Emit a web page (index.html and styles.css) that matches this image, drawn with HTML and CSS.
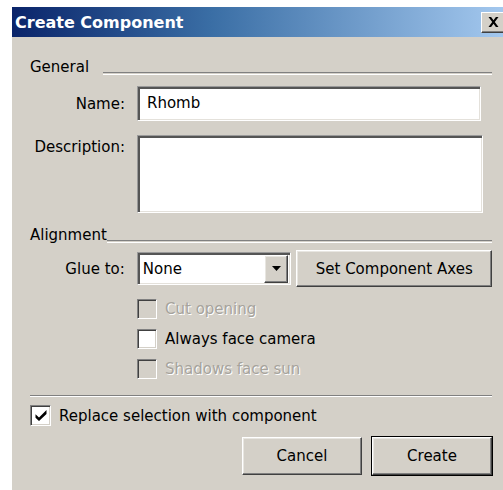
FILE: index.html
```html
<!DOCTYPE html>
<html>
<head>
<meta charset="utf-8">
<title>Create Component</title>
<link rel="stylesheet" href="styles.css">
</head>
<body>
<div class="dialog">
  <div class="titlebar">
    <span class="title">Create Component</span>
    <span class="close">
      <svg width="11" height="10" viewBox="0 0 11 10"><path d="M0.5 0h2.6l2.4 3.3L7.9 0h2.6L6.8 5l3.7 5H7.9L5.5 6.7 3.1 10H0.5l3.7-5z" fill="#000"/></svg>
    </span>
  </div>
  <div class="content">
    <div class="group-title"><span>General</span><span class="rule rule-gap"></span></div>

    <div class="field-row name-row">
      <label class="label">Name:</label>
      <div class="sunken input">Rhomb</div>
    </div>

    <div class="field-row desc-row">
      <label class="label label-top">Description:</label>
      <div class="sunken textarea"></div>
    </div>

    <div class="group-title align-title"><span>Alignment</span><span class="rule"></span></div>

    <div class="field-row glue-row">
      <label class="label">Glue to:</label>
      <div class="sunken select">
        <span class="select-value">None</span>
        <span class="raised drop">
          <svg width="9" height="5" viewBox="0 0 9 5"><path d="M0 0h9L4.5 5z" fill="#000"/></svg>
        </span>
      </div>
      <button class="raised btn axes">Set Component Axes</button>
    </div>

    <div class="checks">
      <div class="check disabled"><span class="box"></span><span>Cut opening</span></div>
      <div class="check"><span class="box white"></span><span>Always face camera</span></div>
      <div class="check disabled"><span class="box"></span><span>Shadows face sun</span></div>
    </div>

    <div class="separator"></div>

    <div class="check replace">
      <span class="box white">
        <svg width="12" height="11" viewBox="0 0 12 11"><path d="M0.5 4.2l3.5 3.3L11.5 0v4L4 11 0.5 7.8z" fill="#000"/></svg>
      </span>
      <span>Replace selection with component</span>
    </div>

    <div class="actions">
      <button class="raised btn">Cancel</button>
      <button class="raised btn default">Create</button>
    </div>
  </div>
</div>
</body>
</html>
```
FILE: styles.css
```css
html, body {
  margin: 0;
  background: #fff;
  overflow: hidden;
}

body {
  padding: 7px 0 0 12px;
  font-family: "DejaVu Sans", Verdana, sans-serif;
  font-size: 15px;
  color: #000;
}

.dialog {
  width: 498px;
  height: 500px;
  background: #d4d0c8;
}

/* caption bar */
.titlebar {
  height: 30px;
  display: flex;
  align-items: center;
  justify-content: space-between;
  padding: 0 0 0 3px;
  background: linear-gradient(to right, #0a246a 0%, #3a6ea5 40%, #a6caf0 100%);
}

.title {
  color: #fff;
  font-weight: bold;
  font-size: 16px;
}

.close {
  width: 24px;
  height: 21px;
  margin-right: 5px;
  box-sizing: border-box;
  display: flex;
  align-items: center;
  justify-content: center;
  background: #d4d0c8;
  border: 1px solid;
  border-color: #fff #404040 #404040 #fff;
  box-shadow: inset -1px -1px 0 #808080;
}

.content {
  padding: 20px 0 0 18px;
  width: 462px;
}

/* group captions with an etched rule */
.group-title {
  display: flex;
  align-items: flex-start;
  height: 20px;
  line-height: 20px;
}

.rule {
  flex: 1;
  height: 1px;
  margin-top: 15px;
  border-top: 1px solid #808080;
  border-bottom: 1px solid #fff;
}

.rule-gap {
  margin-left: 14px;
}

.align-title {
  margin-top: 12px;
}

.field-row {
  display: flex;
  align-items: center;
}

.label {
  width: 95px;
  margin-right: 12px;
  text-align: right;
  line-height: 20px;
}

.label-top {
  align-self: flex-start;
  padding-top: 2px;
}

/* sunken 3D edit boxes */
.sunken {
  box-sizing: border-box;
  background: #fff;
  border: 1px solid;
  border-color: #9a9a9a #fff #fff #9a9a9a;
  box-shadow: inset 2px 2px 0 #555, inset -1px -1px 0 #e4e1db;
}

.name-row {
  margin-top: 9px;
}

.input {
  width: 344px;
  height: 35px;
  padding: 6px 0 0 9px;
  line-height: 20px;
}

.desc-row {
  margin-top: 14px;
}

.textarea {
  width: 346px;
  height: 78px;
}

.glue-row {
  margin-top: 5px;
  height: 37px;
}

.select {
  width: 155px;
  height: 33px;
  display: flex;
  align-items: center;
  justify-content: space-between;
  padding: 2px 2px 2px 5px;
}

.select-value {
  line-height: 20px;
}

/* raised 3D buttons */
.raised {
  box-sizing: border-box;
  background: #d4d0c8;
  border: 1px solid;
  border-color: #fff #404040 #404040 #fff;
  box-shadow: inset -1px -1px 0 #808080, inset 1px 1px 0 #e8e6e1;
}

.drop {
  width: 24px;
  height: 28px;
  display: flex;
  align-items: center;
  justify-content: center;
}

.btn {
  font-family: inherit;
  font-size: 15px;
  color: #000;
  padding: 0;
  height: 38px;
}

.axes {
  margin-left: 5px;
  width: 196px;
  height: 37px;
}

.checks {
  margin: 12px 0 0 107px;
  display: flex;
  flex-direction: column;
  gap: 10px;
}

.check {
  display: flex;
  align-items: center;
  gap: 8px;
  height: 20px;
  line-height: 20px;
}

.box {
  box-sizing: border-box;
  width: 20px;
  height: 20px;
  display: flex;
  align-items: center;
  justify-content: center;
  border: 1px solid;
  border-color: #808080 #fff #fff #808080;
  box-shadow: inset 1px 1px 0 #404040, inset -1px -1px 0 #d4d0c8;
  background: #d4d0c8;
}

.box.white {
  background: #fff;
}

.disabled {
  color: #a6a39c;
  text-shadow: 1px 1px 0 #fff;
}

.separator {
  margin-top: 16px;
  height: 0;
  border-top: 1px solid #808080;
  border-bottom: 1px solid #fff;
}

.replace {
  margin-top: 8px;
  height: 21px;
}

.replace .box {
  width: 21px;
  height: 21px;
}

.actions {
  margin-top: 11px;
  display: flex;
  justify-content: flex-end;
  gap: 10px;
}

.actions .btn {
  width: 120px;
}

.default {
  outline: 1px solid #000;
  outline-offset: 0;
  border-color: #fff #404040 #404040 #fff;
}
```
